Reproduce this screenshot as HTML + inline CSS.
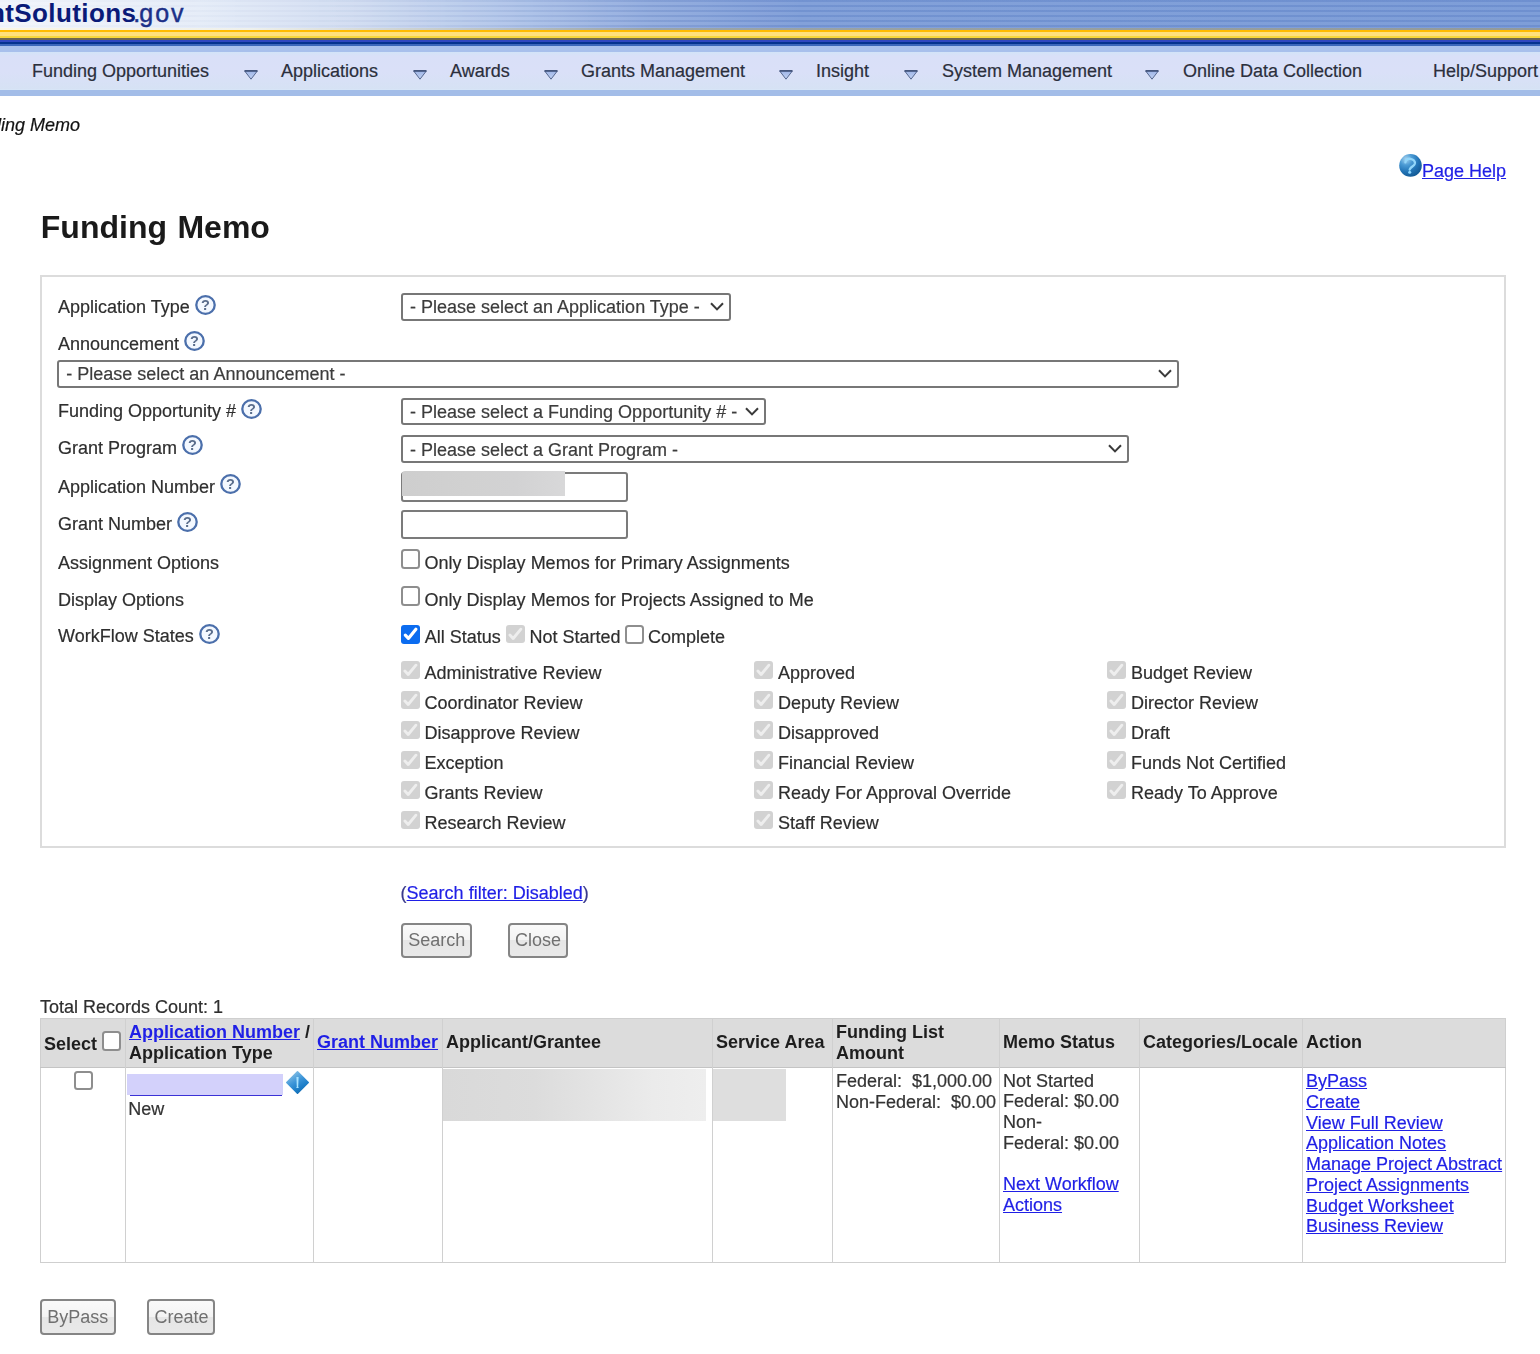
<!DOCTYPE html>
<html><head><meta charset="utf-8">
<style>
html,body{margin:0;padding:0;background:#fff;width:1540px;height:1354px;overflow:hidden;position:relative}
body{font-family:"Liberation Sans",sans-serif;font-size:18px;color:#222}
.a{position:absolute;white-space:nowrap;line-height:20px}
.hd{position:absolute;left:0;width:1540px}
.sel{position:absolute;box-sizing:border-box;border:2px solid #777;border-radius:3px;background:#fff}
.sel .t{position:absolute;left:7px;top:1px;line-height:20px;color:#3c3c3c;white-space:nowrap}
.sel svg{position:absolute;top:8px}
.inp{position:absolute;box-sizing:border-box;border:2px solid #7b7b7b;border-radius:3px;background:#fff}
.cb{position:absolute;box-sizing:border-box;width:19px;height:19.5px;border:2px solid #8e8e8e;border-radius:3.5px;background:#fff}
.cbd{position:absolute;width:19px;height:18px;border-radius:3px;background:#d2d2d2}
.cbd svg,.cbc svg{position:absolute;left:0;top:0}
.cbc{position:absolute;width:19px;height:19px;border-radius:3px;background:#0b6cf0}
.lbl{color:#2e2e2e}
.gray{color:#333}
.nav{color:#2b2f3c}
.btn{position:absolute;box-sizing:border-box;border:2px solid #858585;border-radius:4px;background:linear-gradient(#fafafa 0,#f3f3f3 50%,#e6e6e6 50%,#e9e9e9 100%);color:#707070}
.btn .t{position:absolute;top:6px;line-height:20px;white-space:nowrap}
.qi{vertical-align:text-bottom;position:relative;top:-2.3px}
a,.lnk{color:#1f1fe6;text-decoration:underline}
.th{font-weight:bold;color:#1e1e1e}
.lbl,.gray,.nav,.sel .t,.lnk,.rl{-webkit-text-stroke:0.2px}
.th{-webkit-text-stroke:0}
</style></head><body><div id="wrap" style="position:absolute;left:0;top:0;width:1540px;height:1354px;overflow:hidden;filter:blur(0.35px)">

<!-- HEADER -->
<div class="hd" style="top:0;height:28px;background:linear-gradient(90deg,#f2f5fb 0px,#e6edf8 200px,#d3def2 350px,#b2c6ea 500px,#8ea9dd 650px,#7a9ad7 800px,#7597d6 1540px)"></div>
<div class="hd" style="top:0;height:28px;background:repeating-linear-gradient(180deg,rgba(60,90,160,.11) 0px,rgba(60,90,160,.11) 2px,rgba(255,255,255,.07) 2px,rgba(255,255,255,.07) 5px);-webkit-mask-image:linear-gradient(90deg,rgba(0,0,0,.15) 0,rgba(0,0,0,.3) 300px,#000 650px)"></div>

<div class="hd" style="top:28px;height:2px;background:linear-gradient(90deg,#fbf6e4 0,#eef0ec 250px,#9aa4a8 650px,#939a9a 1540px)"></div>
<div class="hd" style="top:30px;height:2px;background:#ffbb00"></div>
<div class="hd" style="top:32px;height:4px;background:#ffe07c"></div>
<div class="hd" style="top:36px;height:2px;background:#f6d63c"></div>
<div class="hd" style="top:38px;height:2px;background:#6f6650"></div>
<div class="hd" style="top:40px;height:2px;background:#2e46c0"></div>
<div class="hd" style="top:42px;height:2px;background:#03318f"></div>
<div class="hd" style="top:44px;height:2px;background:#3a66bb"></div>
<div class="hd" style="top:46px;height:6px;background:#a8c0ec"></div>
<div class="hd" style="top:52px;height:38px;background:linear-gradient(#d3e4f8 0,#d9e0f8 4px,#dae0f8 20px,#d6e2f4 37px,#d8e8fa 38px)"></div>
<div class="hd" style="top:90px;height:6px;background:#a3bde8"></div>

<div class="a" style="left:-57px;top:-2px;font-size:26px;line-height:30px;color:#0a1a78;letter-spacing:0.4px"><b>GrantSolutions</b></div>
<div class="a" style="left:133.3px;top:-2px;font-size:25px;line-height:30px;color:#1c3088;-webkit-text-stroke:0.45px #1c3088">.</div><div class="a" style="left:139.3px;top:-2px;font-size:25px;line-height:30px;color:#1c3088;letter-spacing:2px;-webkit-text-stroke:0.45px #1c3088">gov</div>

<div class="a nav" style="left:32px;top:61px">Funding Opportunities</div>
<svg class="a" style="left:244px;top:69.5px" width="14" height="10" viewBox="0 0 14 10"><defs><linearGradient id="tg243" x1="0" y1="0" x2="0" y2="1"><stop offset="0" stop-color="#9db4e6"/><stop offset="1" stop-color="#c3d3f3"/></linearGradient></defs><path d="M0.6 0.9 L13.4 0.9 L7 9.2 Z" fill="url(#tg243)" stroke="#56688f" stroke-width="1" stroke-linejoin="round"/><path d="M0.6 0.9 L13.4 0.9" stroke="#34466e" stroke-width="1.4"/></svg>
<div class="a nav" style="left:281px;top:61px">Applications</div>
<svg class="a" style="left:413px;top:69.5px" width="14" height="10" viewBox="0 0 14 10"><defs><linearGradient id="tg412" x1="0" y1="0" x2="0" y2="1"><stop offset="0" stop-color="#9db4e6"/><stop offset="1" stop-color="#c3d3f3"/></linearGradient></defs><path d="M0.6 0.9 L13.4 0.9 L7 9.2 Z" fill="url(#tg412)" stroke="#56688f" stroke-width="1" stroke-linejoin="round"/><path d="M0.6 0.9 L13.4 0.9" stroke="#34466e" stroke-width="1.4"/></svg>
<div class="a nav" style="left:450px;top:61px">Awards</div>
<svg class="a" style="left:544px;top:69.5px" width="14" height="10" viewBox="0 0 14 10"><defs><linearGradient id="tg543" x1="0" y1="0" x2="0" y2="1"><stop offset="0" stop-color="#9db4e6"/><stop offset="1" stop-color="#c3d3f3"/></linearGradient></defs><path d="M0.6 0.9 L13.4 0.9 L7 9.2 Z" fill="url(#tg543)" stroke="#56688f" stroke-width="1" stroke-linejoin="round"/><path d="M0.6 0.9 L13.4 0.9" stroke="#34466e" stroke-width="1.4"/></svg>
<div class="a nav" style="left:581px;top:61px">Grants Management</div>
<svg class="a" style="left:779px;top:69.5px" width="14" height="10" viewBox="0 0 14 10"><defs><linearGradient id="tg778" x1="0" y1="0" x2="0" y2="1"><stop offset="0" stop-color="#9db4e6"/><stop offset="1" stop-color="#c3d3f3"/></linearGradient></defs><path d="M0.6 0.9 L13.4 0.9 L7 9.2 Z" fill="url(#tg778)" stroke="#56688f" stroke-width="1" stroke-linejoin="round"/><path d="M0.6 0.9 L13.4 0.9" stroke="#34466e" stroke-width="1.4"/></svg>
<div class="a nav" style="left:816px;top:61px">Insight</div>
<svg class="a" style="left:904px;top:69.5px" width="14" height="10" viewBox="0 0 14 10"><defs><linearGradient id="tg903" x1="0" y1="0" x2="0" y2="1"><stop offset="0" stop-color="#9db4e6"/><stop offset="1" stop-color="#c3d3f3"/></linearGradient></defs><path d="M0.6 0.9 L13.4 0.9 L7 9.2 Z" fill="url(#tg903)" stroke="#56688f" stroke-width="1" stroke-linejoin="round"/><path d="M0.6 0.9 L13.4 0.9" stroke="#34466e" stroke-width="1.4"/></svg>
<div class="a nav" style="left:942px;top:61px">System Management</div>
<svg class="a" style="left:1145px;top:69.5px" width="14" height="10" viewBox="0 0 14 10"><defs><linearGradient id="tg1144" x1="0" y1="0" x2="0" y2="1"><stop offset="0" stop-color="#9db4e6"/><stop offset="1" stop-color="#c3d3f3"/></linearGradient></defs><path d="M0.6 0.9 L13.4 0.9 L7 9.2 Z" fill="url(#tg1144)" stroke="#56688f" stroke-width="1" stroke-linejoin="round"/><path d="M0.6 0.9 L13.4 0.9" stroke="#34466e" stroke-width="1.4"/></svg>
<div class="a nav" style="left:1183px;top:61px">Online Data Collection</div>
<div class="a nav" style="left:1433px;top:61px">Help/Support</div>

<!-- breadcrumb -->
<div class="a rl" style="left:-9px;top:115px;font-style:italic;color:#111">ding Memo</div>

<!-- page help -->
<svg class="a" style="left:1399px;top:153.8px" width="23" height="23" viewBox="0 0 23 23">
<defs><radialGradient id="ph" cx="30%" cy="22%" r="80%"><stop offset="0" stop-color="#a6d2ee"/><stop offset=".35" stop-color="#4a9ad4"/><stop offset=".7" stop-color="#2274b6"/><stop offset="1" stop-color="#145c98"/></radialGradient></defs>
<circle cx="11.5" cy="11.4" r="11.3" fill="url(#ph)"/>
<path d="M6.4 8.4 C6.8 5.6 9 4.6 11.3 4.8 C14.5 5.1 16.4 7.2 15.8 9.8 C15.2 12 12.3 12.7 11.2 14.6 L10.7 15.6" fill="none" stroke="#92d6fa" stroke-width="2.3" stroke-linecap="round"/>
<circle cx="10.7" cy="18.3" r="1.5" fill="#8fd8ff"/></svg>
<div class="a rl" style="left:1422px;top:161px"><a>Page Help</a></div>

<!-- heading -->
<div class="a" style="left:40.8px;top:208.5px;font-size:32px;line-height:36px;font-weight:bold;color:#1a1a1a;word-spacing:1.6px">Funding Memo</div>

<!-- form box -->
<div style="position:absolute;left:40px;top:275px;width:1466px;height:573px;box-sizing:border-box;border:2px solid #dcdcdc"></div>

<!--FORM-->
<div class="a lbl" style="left:58px;top:297px">Application Type <svg class="qi" width="21" height="20" viewBox="0 0 21 20"><ellipse cx="10.5" cy="10" rx="9.2" ry="8.8" fill="#f3f8ff" stroke="#4b6fab" stroke-width="2.3"/><text x="10.4" y="15.2" text-anchor="middle" font-family="Liberation Sans" font-weight="bold" font-size="14.5" fill="#5a6d8c">?</text></svg></div>
<div class="a lbl" style="left:58px;top:333.5px">Announcement <svg class="qi" width="21" height="20" viewBox="0 0 21 20"><ellipse cx="10.5" cy="10" rx="9.2" ry="8.8" fill="#f3f8ff" stroke="#4b6fab" stroke-width="2.3"/><text x="10.4" y="15.2" text-anchor="middle" font-family="Liberation Sans" font-weight="bold" font-size="14.5" fill="#5a6d8c">?</text></svg></div>
<div class="a lbl" style="left:58px;top:401px">Funding Opportunity # <svg class="qi" width="21" height="20" viewBox="0 0 21 20"><ellipse cx="10.5" cy="10" rx="9.2" ry="8.8" fill="#f3f8ff" stroke="#4b6fab" stroke-width="2.3"/><text x="10.4" y="15.2" text-anchor="middle" font-family="Liberation Sans" font-weight="bold" font-size="14.5" fill="#5a6d8c">?</text></svg></div>
<div class="a lbl" style="left:58px;top:437.5px">Grant Program <svg class="qi" width="21" height="20" viewBox="0 0 21 20"><ellipse cx="10.5" cy="10" rx="9.2" ry="8.8" fill="#f3f8ff" stroke="#4b6fab" stroke-width="2.3"/><text x="10.4" y="15.2" text-anchor="middle" font-family="Liberation Sans" font-weight="bold" font-size="14.5" fill="#5a6d8c">?</text></svg></div>
<div class="a lbl" style="left:58px;top:476.5px">Application Number <svg class="qi" width="21" height="20" viewBox="0 0 21 20"><ellipse cx="10.5" cy="10" rx="9.2" ry="8.8" fill="#f3f8ff" stroke="#4b6fab" stroke-width="2.3"/><text x="10.4" y="15.2" text-anchor="middle" font-family="Liberation Sans" font-weight="bold" font-size="14.5" fill="#5a6d8c">?</text></svg></div>
<div class="a lbl" style="left:58px;top:514.3px">Grant Number <svg class="qi" width="21" height="20" viewBox="0 0 21 20"><ellipse cx="10.5" cy="10" rx="9.2" ry="8.8" fill="#f3f8ff" stroke="#4b6fab" stroke-width="2.3"/><text x="10.4" y="15.2" text-anchor="middle" font-family="Liberation Sans" font-weight="bold" font-size="14.5" fill="#5a6d8c">?</text></svg></div>
<div class="a lbl" style="left:58px;top:552.6px">Assignment Options</div>
<div class="a lbl" style="left:58px;top:589.5px">Display Options</div>
<div class="a lbl" style="left:58px;top:626.4px">WorkFlow States <svg class="qi" width="21" height="20" viewBox="0 0 21 20"><ellipse cx="10.5" cy="10" rx="9.2" ry="8.8" fill="#f3f8ff" stroke="#4b6fab" stroke-width="2.3"/><text x="10.4" y="15.2" text-anchor="middle" font-family="Liberation Sans" font-weight="bold" font-size="14.5" fill="#5a6d8c">?</text></svg></div>
<div class="sel" style="left:401px;top:293px;width:330px;height:28px"><div class="t" style="top:2px">- Please select an Application Type -</div></div>
<svg class="a" style="left:710px;top:302px" width="14" height="9" viewBox="0 0 14 9"><path d="M1 1.2 L7 7.4 L13 1.2" fill="none" stroke="#3a3a3a" stroke-width="2"/></svg>
<div class="sel" style="left:57.3px;top:360px;width:1121.5px;height:27.5px"><div class="t" style="top:2px">- Please select an Announcement -</div></div>
<svg class="a" style="left:1157.8px;top:369px" width="14" height="9" viewBox="0 0 14 9"><path d="M1 1.2 L7 7.4 L13 1.2" fill="none" stroke="#3a3a3a" stroke-width="2"/></svg>
<div class="sel" style="left:401px;top:398px;width:365px;height:27px"><div class="t" style="top:2px">- Please select a Funding Opportunity # -</div></div>
<svg class="a" style="left:745px;top:407px" width="14" height="9" viewBox="0 0 14 9"><path d="M1 1.2 L7 7.4 L13 1.2" fill="none" stroke="#3a3a3a" stroke-width="2"/></svg>
<div class="sel" style="left:401px;top:435px;width:728px;height:27.5px"><div class="t" style="top:3px">- Please select a Grant Program -</div></div>
<svg class="a" style="left:1108px;top:444px" width="14" height="9" viewBox="0 0 14 9"><path d="M1 1.2 L7 7.4 L13 1.2" fill="none" stroke="#3a3a3a" stroke-width="2"/></svg>
<div class="inp" style="left:401px;top:472px;width:227px;height:29.6px"></div>
<div style="position:absolute;left:402px;top:471.2px;width:163px;height:24.8px;border-top-left-radius:3px;background:linear-gradient(90deg,#cecece,#d1d1d1 40%,#d2d2d3 70%,#d8d8d9)"></div>
<div class="inp" style="left:401px;top:510px;width:227px;height:29px"></div>
<div class="cb" style="left:401px;top:549.2px"></div>
<div class="a lbl" style="left:424.6px;top:553px">Only Display Memos for Primary Assignments</div>
<div class="cb" style="left:401px;top:586.2px"></div>
<div class="a lbl" style="left:424.6px;top:589.5px">Only Display Memos for Projects Assigned to Me</div>
<div class="cbc" style="left:401px;top:624.6px"><svg width="19" height="19" viewBox="0 0 19 19"><path d="M4.3 10.2 L7.4 13.4 L14.9 4.2" fill="none" stroke="#fff" stroke-width="3.2" stroke-linecap="round" stroke-linejoin="round"/></svg></div>
<div class="a lbl" style="left:424.8px;top:627px">All Status</div>
<div class="cbd" style="left:506px;top:624.7px"><svg width="19" height="18" viewBox="0 0 19 18"><path d="M3.9 10 L7.2 13.5 L14.9 4.2" fill="none" stroke="#eeeeee" stroke-width="2.9" stroke-linecap="round" stroke-linejoin="round"/></svg></div>
<div class="a lbl" style="left:529.4px;top:627px">Not Started</div>
<div class="cb" style="left:625px;top:624.5px"></div>
<div class="a lbl" style="left:648px;top:627px">Complete</div>
<div class="cbd" style="left:401.2px;top:660.7px"><svg width="19" height="18" viewBox="0 0 19 18"><path d="M3.9 10 L7.2 13.5 L14.9 4.2" fill="none" stroke="#eeeeee" stroke-width="2.9" stroke-linecap="round" stroke-linejoin="round"/></svg></div>
<div class="a lbl" style="left:424.5px;top:663px">Administrative Review</div>
<div class="cbd" style="left:753.8px;top:660.7px"><svg width="19" height="18" viewBox="0 0 19 18"><path d="M3.9 10 L7.2 13.5 L14.9 4.2" fill="none" stroke="#eeeeee" stroke-width="2.9" stroke-linecap="round" stroke-linejoin="round"/></svg></div>
<div class="a lbl" style="left:778px;top:663px">Approved</div>
<div class="cbd" style="left:1106.6px;top:660.7px"><svg width="19" height="18" viewBox="0 0 19 18"><path d="M3.9 10 L7.2 13.5 L14.9 4.2" fill="none" stroke="#eeeeee" stroke-width="2.9" stroke-linecap="round" stroke-linejoin="round"/></svg></div>
<div class="a lbl" style="left:1131px;top:663px">Budget Review</div>
<div class="cbd" style="left:401.2px;top:690.7px"><svg width="19" height="18" viewBox="0 0 19 18"><path d="M3.9 10 L7.2 13.5 L14.9 4.2" fill="none" stroke="#eeeeee" stroke-width="2.9" stroke-linecap="round" stroke-linejoin="round"/></svg></div>
<div class="a lbl" style="left:424.5px;top:693px">Coordinator Review</div>
<div class="cbd" style="left:753.8px;top:690.7px"><svg width="19" height="18" viewBox="0 0 19 18"><path d="M3.9 10 L7.2 13.5 L14.9 4.2" fill="none" stroke="#eeeeee" stroke-width="2.9" stroke-linecap="round" stroke-linejoin="round"/></svg></div>
<div class="a lbl" style="left:778px;top:693px">Deputy Review</div>
<div class="cbd" style="left:1106.6px;top:690.7px"><svg width="19" height="18" viewBox="0 0 19 18"><path d="M3.9 10 L7.2 13.5 L14.9 4.2" fill="none" stroke="#eeeeee" stroke-width="2.9" stroke-linecap="round" stroke-linejoin="round"/></svg></div>
<div class="a lbl" style="left:1131px;top:693px">Director Review</div>
<div class="cbd" style="left:401.2px;top:720.7px"><svg width="19" height="18" viewBox="0 0 19 18"><path d="M3.9 10 L7.2 13.5 L14.9 4.2" fill="none" stroke="#eeeeee" stroke-width="2.9" stroke-linecap="round" stroke-linejoin="round"/></svg></div>
<div class="a lbl" style="left:424.5px;top:723px">Disapprove Review</div>
<div class="cbd" style="left:753.8px;top:720.7px"><svg width="19" height="18" viewBox="0 0 19 18"><path d="M3.9 10 L7.2 13.5 L14.9 4.2" fill="none" stroke="#eeeeee" stroke-width="2.9" stroke-linecap="round" stroke-linejoin="round"/></svg></div>
<div class="a lbl" style="left:778px;top:723px">Disapproved</div>
<div class="cbd" style="left:1106.6px;top:720.7px"><svg width="19" height="18" viewBox="0 0 19 18"><path d="M3.9 10 L7.2 13.5 L14.9 4.2" fill="none" stroke="#eeeeee" stroke-width="2.9" stroke-linecap="round" stroke-linejoin="round"/></svg></div>
<div class="a lbl" style="left:1131px;top:723px">Draft</div>
<div class="cbd" style="left:401.2px;top:750.7px"><svg width="19" height="18" viewBox="0 0 19 18"><path d="M3.9 10 L7.2 13.5 L14.9 4.2" fill="none" stroke="#eeeeee" stroke-width="2.9" stroke-linecap="round" stroke-linejoin="round"/></svg></div>
<div class="a lbl" style="left:424.5px;top:753px">Exception</div>
<div class="cbd" style="left:753.8px;top:750.7px"><svg width="19" height="18" viewBox="0 0 19 18"><path d="M3.9 10 L7.2 13.5 L14.9 4.2" fill="none" stroke="#eeeeee" stroke-width="2.9" stroke-linecap="round" stroke-linejoin="round"/></svg></div>
<div class="a lbl" style="left:778px;top:753px">Financial Review</div>
<div class="cbd" style="left:1106.6px;top:750.7px"><svg width="19" height="18" viewBox="0 0 19 18"><path d="M3.9 10 L7.2 13.5 L14.9 4.2" fill="none" stroke="#eeeeee" stroke-width="2.9" stroke-linecap="round" stroke-linejoin="round"/></svg></div>
<div class="a lbl" style="left:1131px;top:753px">Funds Not Certified</div>
<div class="cbd" style="left:401.2px;top:780.7px"><svg width="19" height="18" viewBox="0 0 19 18"><path d="M3.9 10 L7.2 13.5 L14.9 4.2" fill="none" stroke="#eeeeee" stroke-width="2.9" stroke-linecap="round" stroke-linejoin="round"/></svg></div>
<div class="a lbl" style="left:424.5px;top:783px">Grants Review</div>
<div class="cbd" style="left:753.8px;top:780.7px"><svg width="19" height="18" viewBox="0 0 19 18"><path d="M3.9 10 L7.2 13.5 L14.9 4.2" fill="none" stroke="#eeeeee" stroke-width="2.9" stroke-linecap="round" stroke-linejoin="round"/></svg></div>
<div class="a lbl" style="left:778px;top:783px">Ready For Approval Override</div>
<div class="cbd" style="left:1106.6px;top:780.7px"><svg width="19" height="18" viewBox="0 0 19 18"><path d="M3.9 10 L7.2 13.5 L14.9 4.2" fill="none" stroke="#eeeeee" stroke-width="2.9" stroke-linecap="round" stroke-linejoin="round"/></svg></div>
<div class="a lbl" style="left:1131px;top:783px">Ready To Approve</div>
<div class="cbd" style="left:401.2px;top:810.7px"><svg width="19" height="18" viewBox="0 0 19 18"><path d="M3.9 10 L7.2 13.5 L14.9 4.2" fill="none" stroke="#eeeeee" stroke-width="2.9" stroke-linecap="round" stroke-linejoin="round"/></svg></div>
<div class="a lbl" style="left:424.5px;top:813px">Research Review</div>
<div class="cbd" style="left:753.8px;top:810.7px"><svg width="19" height="18" viewBox="0 0 19 18"><path d="M3.9 10 L7.2 13.5 L14.9 4.2" fill="none" stroke="#eeeeee" stroke-width="2.9" stroke-linecap="round" stroke-linejoin="round"/></svg></div>
<div class="a lbl" style="left:778px;top:813px">Staff Review</div>
<div class="a lnk" style="left:400.6px;top:882.6px;text-decoration:none;color:#3a3a8c">(<a>Search filter: Disabled</a>)</div>
<div class="btn" style="left:400.8px;top:923px;width:71.7px;height:34.5px"><div class="t" style="left:5.5px;top:4.5px">Search</div></div>
<div class="btn" style="left:507.8px;top:923px;width:60.7px;height:34.5px"><div class="t" style="left:5.1px;top:4.5px">Close</div></div>
<div class="a lbl" style="left:40px;top:997px">Total Records Count: 1</div>
<div style="position:absolute;left:40px;top:1018px;width:1466px;height:49px;background:#dcdcdc"></div>
<div style="position:absolute;left:40px;top:1018px;width:1466px;height:245px;box-sizing:border-box;border:1px solid #cfcfcf"></div>
<div style="position:absolute;left:40px;top:1067px;width:1466px;height:1px;background:#c4c4c4"></div>
<div style="position:absolute;left:125px;top:1018px;width:1px;height:245px;background:#d0d0d0"></div>
<div style="position:absolute;left:313px;top:1018px;width:1px;height:245px;background:#d0d0d0"></div>
<div style="position:absolute;left:442px;top:1018px;width:1px;height:245px;background:#d0d0d0"></div>
<div style="position:absolute;left:712px;top:1018px;width:1px;height:245px;background:#d0d0d0"></div>
<div style="position:absolute;left:832px;top:1018px;width:1px;height:245px;background:#d0d0d0"></div>
<div style="position:absolute;left:999px;top:1018px;width:1px;height:245px;background:#d0d0d0"></div>
<div style="position:absolute;left:1139px;top:1018px;width:1px;height:245px;background:#d0d0d0"></div>
<div style="position:absolute;left:1302px;top:1018px;width:1px;height:245px;background:#d0d0d0"></div>
<div class="a th" style="left:44px;top:1033.6px">Select</div>
<div class="cb" style="left:102px;top:1031px"></div>
<div class="a th" style="left:129px;top:1021.7px"><a>Application Number</a> /</div>
<div class="a th" style="left:129px;top:1043px">Application Type</div>
<div class="a th" style="left:317px;top:1031.5px"><a>Grant Number</a></div>
<div class="a th" style="left:446px;top:1031.5px">Applicant/Grantee</div>
<div class="a th" style="left:716px;top:1031.5px">Service Area</div>
<div class="a th" style="left:836px;top:1022px">Funding List</div>
<div class="a th" style="left:836px;top:1042.6px">Amount</div>
<div class="a th" style="left:1003px;top:1032px">Memo Status</div>
<div class="a th" style="left:1143px;top:1032px">Categories/Locale</div>
<div class="a th" style="left:1306px;top:1032px">Action</div>
<div class="cb" style="left:73.6px;top:1070.6px"></div>
<div style="position:absolute;left:127px;top:1073.5px;width:156px;height:21px;background:#d3d1fb"></div>
<div style="position:absolute;left:129.5px;top:1094.5px;width:152px;height:1.5px;background:#3b32d6"></div>
<svg class="a" style="left:285px;top:1070px" width="25" height="25" viewBox="0 0 25 25"><defs><linearGradient id="ig" x1="0.2" y1="0" x2="0.8" y2="1"><stop offset="0" stop-color="#8ec4e6"/><stop offset=".45" stop-color="#3a94d8"/><stop offset=".75" stop-color="#1a7cc6"/><stop offset="1" stop-color="#1265a8"/></linearGradient></defs><path d="M12.5 1.8 L23.2 12.5 L12.5 23.2 L1.8 12.5 Z" fill="url(#ig)" stroke="url(#ig)" stroke-width="1.6" stroke-linejoin="round"/><path d="M11.4 7 L13.6 7 L13.2 17.2 L14.2 18 L10.8 18 L11.8 17.2 Z" fill="#a8e2ff"/></svg>
<div class="a gray" style="left:128.3px;top:1098.5px">New</div>
<div style="position:absolute;left:443px;top:1069px;width:263px;height:52px;background:linear-gradient(90deg,#d9d9d9,#dcdcdc 35%,#ebebeb 80%,#eeeeee)"></div>
<div style="position:absolute;left:713px;top:1069px;width:73px;height:52px;background:#dedede"></div>
<div class="a gray" style="left:836px;top:1070.6px;line-height:21px">Federal:&nbsp; $1,000.00<br>Non-Federal:&nbsp; $0.00</div>
<div class="a gray" style="left:1003px;top:1070.5px;line-height:20.8px">Not Started<br>Federal: $0.00<br>Non-<br>Federal: $0.00<br><br><a>Next Workflow</a><br><a>Actions</a></div>
<div class="a rl" style="left:1306px;top:1071px;line-height:20.75px"><a>ByPass</a><br><a>Create</a><br><a>View Full Review</a><br><a>Application Notes</a><br><a>Manage Project Abstract</a><br><a>Project Assignments</a><br><a>Budget Worksheet</a><br><a>Business Review</a></div>
<div class="btn" style="left:39.8px;top:1299px;width:76.2px;height:35.5px"><div class="t" style="left:5.5px;top:5.5px">ByPass</div></div>
<div class="btn" style="left:147px;top:1299px;width:67.5px;height:35.5px"><div class="t" style="left:5.5px;top:5.5px">Create</div></div>
<!--/FORM-->

</div></body></html>
